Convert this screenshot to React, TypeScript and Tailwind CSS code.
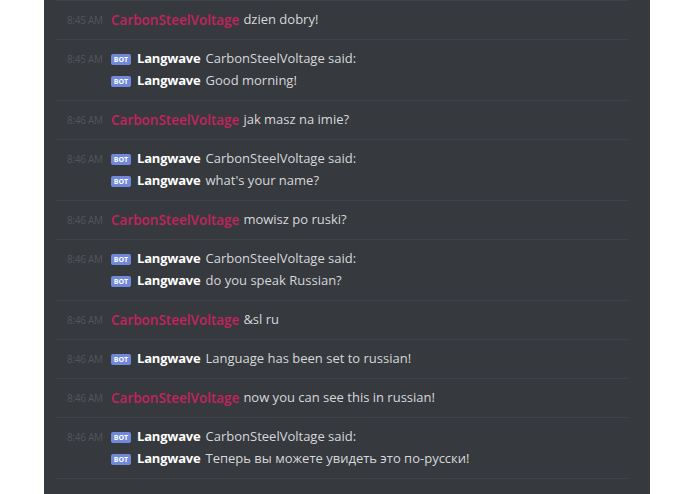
const FONT = { fontFamily: '"Open Sans", "Noto Sans", sans-serif' };

type Msg =
  | { kind: 'user'; time: string; text: string }
  | { kind: 'bot'; time: string; lines: string[] };

const messages: Msg[] = [
  { kind: 'user', time: '8:45 AM', text: 'dzien dobry!' },
  { kind: 'bot', time: '8:45 AM', lines: ['CarbonSteelVoltage said:', 'Good morning!'] },
  { kind: 'user', time: '8:46 AM', text: 'jak masz na imie?' },
  { kind: 'bot', time: '8:46 AM', lines: ['CarbonSteelVoltage said:', "what's your name?"] },
  { kind: 'user', time: '8:46 AM', text: 'mowisz po ruski?' },
  { kind: 'bot', time: '8:46 AM', lines: ['CarbonSteelVoltage said:', 'do you speak Russian?'] },
  { kind: 'user', time: '8:46 AM', text: '&sl ru' },
  { kind: 'bot', time: '8:46 AM', lines: ['Language has been set to russian!'] },
  { kind: 'user', time: '8:46 AM', text: 'now you can see this in russian!' },
  { kind: 'bot', time: '8:46 AM', lines: ['CarbonSteelVoltage said:', 'Теперь вы можете увидеть это по-русски!'] },
];

function BotTag() {
  return (
    <span className="inline-flex h-[11px] w-[20px] items-center justify-center rounded-[2px] bg-[#7289da] text-[7px] font-bold leading-none text-white">
      BOT
    </span>
  );
}

function Time({ t, hidden }: { t: string; hidden?: boolean }) {
  return (
    <span className={`w-[44px] shrink-0 text-[10px] tracking-[-0.3px] text-[#52565d] ${hidden ? 'invisible' : ''}`}>
      {t}
    </span>
  );
}

export default function App() {
  return (
    <div className="flex h-[494px] w-[695px] overflow-hidden bg-white" style={FONT}>
      <div className="ml-[44px] h-full w-[606px] bg-[#36393e]">
        <div className="ml-[11px] mr-[22px] border-t border-[#3f4248]" />
        {messages.map((m, i) => (
          <div key={i} className="ml-[11px] mr-[22px] border-b border-[#3f4248] py-[8px] pl-[12px]">
            {m.kind === 'user' ? (
              <div className="flex h-[22px] items-center">
                <Time t={m.time} />
                <span className="text-[13.5px] font-semibold text-[#c4245c]">CarbonSteelVoltage</span>
                <span className="ml-[4px] text-[13px] text-[#d7d8da]">{m.text}</span>
              </div>
            ) : (
              m.lines.map((l, j) => (
                <div key={j} className="flex h-[22px] items-center">
                  <Time t={m.time} hidden={j > 0} />
                  <BotTag />
                  <span className="ml-[6px] text-[13px] font-bold tracking-[-0.2px] text-white">Langwave</span>
                  <span className="ml-[5px] text-[13px] text-[#d7d8da]">{l}</span>
                </div>
              ))
            )}
          </div>
        ))}
      </div>
    </div>
  );
}
